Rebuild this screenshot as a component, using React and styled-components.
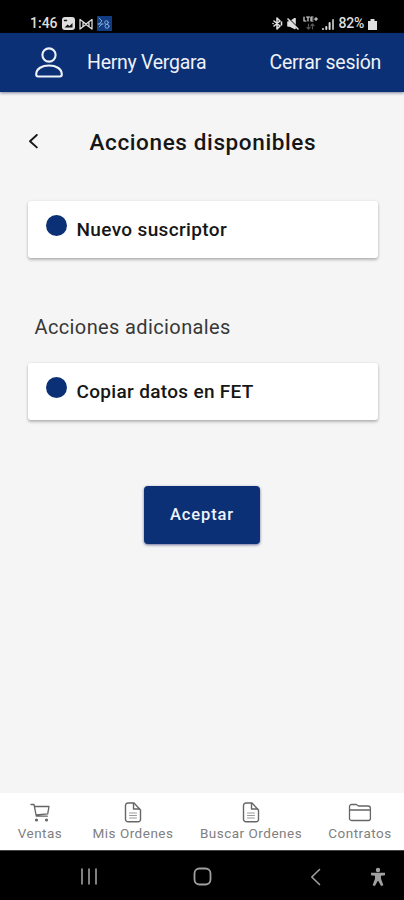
import React from "react";
import styled, { createGlobalStyle } from "styled-components";

const NAVY = "#0b3075";

const GlobalStyle = createGlobalStyle`
  * { box-sizing: border-box; }
  body { margin: 0; background: #f5f5f5; font-family: Roboto, "Liberation Sans", sans-serif; }
`;

const Screen = styled.div`
  display: flex;
  flex-direction: column;
  width: 404px;
  height: 900px;
  overflow: hidden;
  background: #f5f5f5;
  color: #161616;
`;

const StatusBar = styled.div`
  display: flex;
  justify-content: space-between;
  flex: none;
  height: 33px;
  padding: 15px 27px 0 30px;
  background: #000;
  color: #dedede;
`;

const StatusGroup = styled.div`
  display: flex;
  align-items: center;
  height: 17px;
  gap: ${(p) => p.$gap}px;
`;

const StatusText = styled.span`
  font-size: 14px;
  font-weight: 500;
  line-height: 17px;
  letter-spacing: ${(p) => p.$spacing}px;
  white-space: nowrap;
`;

const Header = styled.header`
  display: flex;
  align-items: center;
  flex: none;
  height: 59px;
  padding: 0 23px 0 35px;
  background: ${NAVY};
  color: #eef1f8;
  box-shadow: 0 1px 3px rgba(20, 30, 80, 0.55);
  z-index: 1;
`;

const HeaderText = styled.span`
  font-size: 19.5px;
  line-height: 24px;
  letter-spacing: -0.27px;
  margin-left: ${(p) => (p.$end ? "auto" : "24px")};
  white-space: nowrap;
`;

const Main = styled.main`
  display: flex;
  flex-direction: column;
  flex: 1;
  padding: 36px 26px 0 28px;
`;

const TitleRow = styled.div`
  display: flex;
  align-items: center;
  height: 28px;
  margin-bottom: 45px;
`;

const Title = styled.h1`
  margin: 0 0 1px 50.5px;
  font-size: 22.5px;
  font-weight: 500;
  line-height: 28px;
  letter-spacing: 0.62px;
  white-space: nowrap;
`;

const Card = styled.button`
  display: flex;
  flex: none;
  width: 350px;
  height: 57px;
  padding: 14px 18px;
  border: 0;
  border-radius: 3px;
  background: #fff;
  box-shadow: 0 2px 3px rgba(0, 0, 0, 0.25), 0 0 3px rgba(0, 0, 0, 0.08);
  color: #161616;
  font-family: inherit;
  text-align: left;
`;

const Dot = styled.span`
  flex: none;
  width: 21px;
  height: 21px;
  border-radius: 50%;
  background: ${NAVY};
`;

const CardLabel = styled.span`
  margin: 3px 0 0 9.5px;
  font-size: 19px;
  font-weight: 500;
  line-height: 24px;
  letter-spacing: ${(p) => p.$spacing}px;
  white-space: nowrap;
`;

const Subtitle = styled.h2`
  margin: 56px 0 22px 6.5px;
  font-size: 20px;
  font-weight: 400;
  line-height: 27px;
  letter-spacing: 0.38px;
  color: #383838;
`;

const Accept = styled.button`
  align-self: center;
  width: 116px;
  height: 58px;
  margin: 66px 2px 0 0;
  padding: 0;
  border: 0;
  border-radius: 4px;
  background: ${NAVY};
  box-shadow: 0 1px 3px rgba(20, 20, 100, 0.6);
  color: #f0f3fa;
  font: 500 16.5px/24px Roboto, sans-serif;
  letter-spacing: 0.85px;
`;

const Tabs = styled.nav`
  display: flex;
  flex: none;
  height: 57px;
  padding: 9px 0 0 17.5px;
  background: #fff;
`;

const Tab = styled.div`
  display: flex;
  flex-direction: column;
  align-items: center;
  flex: none;
  width: ${(p) => p.$width}px;
  margin-right: ${(p) => p.$after || 0}px;
  font-size: 13.5px;
  line-height: 16px;
  letter-spacing: 0.5px;
  white-space: nowrap;
  color: #808080;
  svg { margin-bottom: 2px; color: #666; }
`;

const SystemBar = styled.div`
  display: flex;
  align-items: center;
  flex: none;
  height: 50px;
  padding: 2px 17px 0 80px;
  background: #000;
  border-top: 1px solid #444;
  color: #a0a0a0;
`;

const SystemKey = styled.span`
  display: flex;
  margin-left: ${(p) => p.$before || 0}px;
`;

const Icon = ({ w, h, children, width = 1.5 }) => (
  <svg width={w} height={h} viewBox={`0 0 ${w} ${h}`} fill="none" stroke="currentColor"
    strokeWidth={width} strokeLinecap="round" strokeLinejoin="round">{children}</svg>
);

const Gallery = () => (
  <Icon w={13} h={13} width={0}>
    <rect width="13" height="13" rx="3" fill="currentColor" />
    <path d="M2.5 3.5h2" stroke="#111" strokeWidth="1.5" />
    <path d="M2.5 10.5l3-3 2 1.5 3-3v4.5z" fill="#111" />
  </Icon>
);
const Mail = () => (
  <Icon w={14} h={12} width={1.3}>
    <path d="M1 11V1.5L7 6l6-4.5V11L7 6.5 1 11M4 4.5v4M10 4.5v4" />
  </Icon>
);
const AppBadge = () => (
  <Icon w={15} h={15} width={1}>
    <rect width="15" height="15" fill="#123c82" stroke="none" />
    <path d="M2 2l3 3-3 3M1 8h5M2 11l3-3" stroke="#83a9db" />
    <circle cx="9.5" cy="6.5" r="1.8" stroke="#83a9db" />
    <circle cx="10" cy="10.3" r="2" stroke="#83a9db" />
  </Icon>
);
const Bluetooth = () => (
  <Icon w={11} h={13} width={1.6}>
    <path d="M2 4l6 5-3 3V1l3 3-6 5M1 6.5h.1M9.5 5v3" />
  </Icon>
);
const Muted = () => (
  <Icon w={12} h={12} width={1.6}>
    <path d="M1 4h2l5-3.5v10L3 8H1z" fill="currentColor" />
    <path d="M1.5.5l10 10" stroke="#000" strokeWidth="1.5" />
    <path d="M1 1l10 10" />
  </Icon>
);
const Lte = () => (
  <Icon w={15} h={15} width={1.2}>
    <path d="M1 1v4h2M3.5 1h3M5 1v4M10 1H8v4h2M8 3h2M11.5 3h3M13 1.5v3" />
    <path d="M5.5 8v5M4 11.5L5.5 13 7 11.5M9.5 13V8M8 9.5L9.5 8 11 9.5" stroke="#555" />
  </Icon>
);
const Signal = () => (
  <Icon w={12} h={12} width={2}>
    <path d="M1 11v-.1M4.3 11V9M7.6 11V5" />
    <path d="M11 11V2" stroke="#aaa" />
  </Icon>
);
const Battery = () => (
  <Icon w={9} h={12} width={0}>
    <path d="M2.5 1h4v2H9v9H0V3h2.5z" fill="currentColor" />
  </Icon>
);
const User = () => (
  <Icon w={28} h={31} width={2.1}>
    <circle cx="14" cy="8" r="6.6" />
    <path d="M1.2 27.5c0-6 6-9 12.8-9s12.8 3 12.8 9c0 1.4-.5 2-2 2H3.2c-1.5 0-2-.6-2-2z" />
  </Icon>
);
const Back = () => (
  <Icon w={11} h={16} width={1.9}><path d="M8.8 1L2 7.2l6.8 6.2" /></Icon>
);
const Cart = () => (
  <Icon w={20} h={21} width={1.3}>
    <path d="M1 2.5h3l2.3 11.7h11M4.5 4.5H19l-1.3 7.3L6 13" />
    <circle cx="6.5" cy="18" r=".9" fill="currentColor" />
    <circle cx="16.5" cy="18" r=".9" fill="currentColor" />
  </Icon>
);
const Doc = () => (
  <Icon w={18} h={21} width={1.4}>
    <path d="M4 1h6l6.5 7v9.5a2.3 2.3 0 0 1-2.3 2.3H4a2.5 2.5 0 0 1-2.5-2.5V3.5A2.5 2.5 0 0 1 4 1z" />
    <path d="M9.5 1.5V7h6" />
    <path d="M5.5 11h7M5.5 13.5h7M5.5 16h7" strokeWidth="1" stroke="#999" />
  </Icon>
);
const Folder = () => (
  <Icon w={24} h={21} width={1.3}>
    <path d="M1.5 16.5v-12a2 2 0 0 1 2-2h4.8l2.2 1.5H20a2.4 2.4 0 0 1 2.4 2.4v10.1a2 2 0 0 1-2 2H3.5a2 2 0 0 1-2-2zM1.5 8h20.8" />
  </Icon>
);
const Recents = () => (
  <Icon w={18} h={17} width={1.6}><path d="M2 1v15M9 1v15M16 1v15" /></Icon>
);
const Home = () => (
  <Icon w={19} h={19} width={1.8}><rect x="1.5" y="1.5" width="16" height="16" rx="5" /></Icon>
);
const SystemBack = () => (
  <Icon w={11} h={18} width={1.6}><path d="M9.5 1.5L1.8 9l7.7 7.5" /></Icon>
);
const Accessibility = () => (
  <Icon w={16} h={20} width={0}>
    <circle cx="8" cy="3" r="2.2" fill="currentColor" />
    <path d="M1 5.8h14v2.4l-4 .6v3l2.4 6.5-2.3.8L8.3 14h-.6l-2.8 5.1-2.3-.8L5 11.8v-3l-4-.6z" fill="currentColor" />
  </Icon>
);

export default function App() {
  return (
    <>
      <GlobalStyle />
      <Screen>
        <StatusBar>
          <StatusGroup $gap={4}>
            <StatusText $spacing={0}>1:46</StatusText>
            <Gallery /><Mail /><AppBadge />
          </StatusGroup>
          <StatusGroup $gap={4}>
            <Bluetooth /><Muted /><Lte /><Signal />
            <StatusText $spacing={-0.2}>82%</StatusText>
            <Battery />
          </StatusGroup>
        </StatusBar>
        <Header>
          <User />
          <HeaderText>Herny Vergara</HeaderText>
          <HeaderText $end>Cerrar sesión</HeaderText>
        </Header>
        <Main>
          <TitleRow>
            <Back />
            <Title>Acciones disponibles</Title>
          </TitleRow>
          <Card><Dot /><CardLabel $spacing={0.36}>Nuevo suscriptor</CardLabel></Card>
          <Subtitle>Acciones adicionales</Subtitle>
          <Card><Dot /><CardLabel $spacing={0.32}>Copiar datos en FET</CardLabel></Card>
          <Accept>Aceptar</Accept>
        </Main>
        <Tabs>
          <Tab $width={45} $after={30}><Cart />Ventas</Tab>
          <Tab $width={81} $after={26}><Doc />Mis Ordenes</Tab>
          <Tab $width={103} $after={25}><Doc />Buscar Ordenes</Tab>
          <Tab $width={65}><Folder />Contratos</Tab>
        </Tabs>
        <SystemBar>
          <SystemKey><Recents /></SystemKey>
          <SystemKey $before={95}><Home /></SystemKey>
          <SystemKey $before={98}><SystemBack /></SystemKey>
          <SystemKey $before={49}><Accessibility /></SystemKey>
        </SystemBar>
      </Screen>
    </>
  );
}
